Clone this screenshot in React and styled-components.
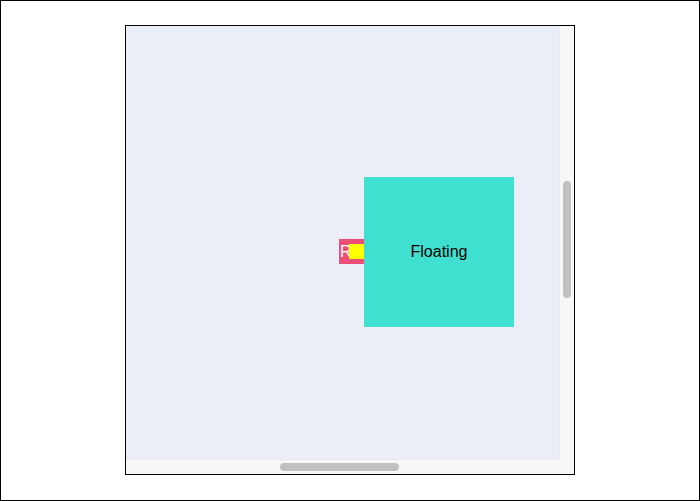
import React, { useLayoutEffect, useRef } from "react";
import styled, { createGlobalStyle } from "styled-components";

const GlobalStyle = createGlobalStyle`
  html, body {
    margin: 0;
    padding: 0;
    background: #fff;
    font-family: "Liberation Sans", Arial, sans-serif;
  }
`;

const Page = styled.main`
  box-sizing: border-box;
  width: 700px;
  height: 501px;
  border: 1px solid #000;
  padding-top: 24px;
`;

const Scroller = styled.div`
  box-sizing: border-box;
  width: 450px;
  height: 450px;
  margin: 0 auto;
  border: 1px solid #000;
  display: grid;
  grid-template-columns: 433px 15px;
  grid-template-rows: 433px 15px;
  background: #f8f8f8;
`;

const Viewport = styled.div`
  overflow: hidden;
  background: #ebeef6;
`;

const Canvas = styled.div`
  position: relative;
  width: 1600px;
  height: 1600px;
`;

const Track = styled.div`
  box-sizing: border-box;
  background: #f8f8f8;
  display: flex;
  flex-direction: ${(p) => (p.$vertical ? "column" : "row")};
  padding: ${(p) => (p.$vertical ? "0 3px" : "3px 0")};
  border-${(p) => (p.$vertical ? "left" : "top")}: 1px solid #e9e9e9;
`;

const Thumb = styled.div`
  flex: none;
  background: #c1c1c1;
  border-radius: 4px;
  ${(p) => (p.$vertical ? "width: 8px;" : "height: 8px;")}
`;

const Corner = styled.div`
  background: #f8f8f8;
`;

const Reference = styled.div`
  position: absolute;
  left: 796px;
  top: 796px;
  width: 25px;
  height: 25px;
  background: #ec4e78;
  color: #fff;
  font-size: 16px;
  line-height: 25px;
  padding-left: 1px;
  box-sizing: border-box;
`;

const Floating = styled.div`
  position: absolute;
  left: 821px;
  top: 734px;
  width: 150px;
  height: 150px;
  background: turquoise;
  color: #000;
  font-size: 16px;
  display: flex;
  align-items: center;
  justify-content: center;
`;

const Arrow = styled.div`
  position: absolute;
  left: -15px;
  top: 67px;
  width: 15px;
  height: 15px;
  background: yellow;
`;

const SCROLL = 583;

export default function App() {
  const viewRef = useRef(null);

  useLayoutEffect(() => {
    const el = viewRef.current;
    if (el) {
      el.scrollTop = SCROLL;
      el.scrollLeft = SCROLL;
    }
  }, []);

  return (
    <>
      <GlobalStyle />
      <Page>
        <Scroller>
          <Viewport ref={viewRef}>
            <Canvas>
              <Reference>R</Reference>
              <Floating>
                Floating
                <Arrow />
              </Floating>
            </Canvas>
          </Viewport>
          <Track $vertical>
            <Thumb $vertical style={{ marginTop: 155, height: 117 }} />
          </Track>
          <Track>
            <Thumb style={{ marginLeft: 154, width: 119 }} />
          </Track>
          <Corner />
        </Scroller>
      </Page>
    </>
  );
}
